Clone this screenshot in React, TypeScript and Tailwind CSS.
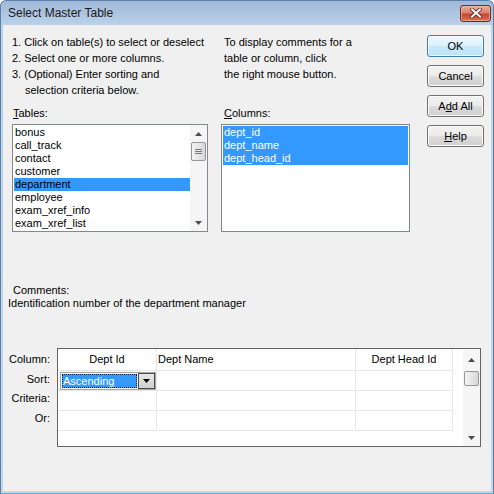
import React from "react";

const font = "font-['Liberation_Sans',Arial,sans-serif]";

const tables = [
  "bonus",
  "call_track",
  "contact",
  "customer",
  "department",
  "employee",
  "exam_xref_info",
  "exam_xref_list",
];

const columns = ["dept_id", "dept_name", "dept_head_id"];

function Arrow({ down = false, color = "#4d4d4d" }: { down?: boolean; color?: string }) {
  return (
    <svg width="7" height="4" viewBox="0 0 7 4">
      <polygon points={down ? "0,0 7,0 3.5,4" : "0,4 7,4 3.5,0"} fill={color} />
    </svg>
  );
}

function Thumb({ h, grip = true }: { h: number; grip?: boolean }) {
  return (
    <div
      className="mx-[1px] flex flex-col items-center justify-center gap-[1px] rounded-[2px] border border-[#979797] bg-[linear-gradient(90deg,#f4f4f4,#e6e6e6_50%,#d6d6d6)]"
      style={{ height: h }}
    >
      {grip && (
        <>
          <div className="h-px w-[7px] bg-[#7a7a7a]" />
          <div className="h-px w-[7px] bg-[#7a7a7a]" />
          <div className="h-px w-[7px] bg-[#7a7a7a]" />
        </>
      )}
    </div>
  );
}

function Button({ children, primary }: { children: React.ReactNode; primary?: boolean }) {
  return (
    <div
      className={
        primary
          ? "flex h-[22px] w-[57px] items-center justify-center rounded-[3px] border border-[#3c7fb1] bg-[linear-gradient(#eef8fe,#dcf0fc_50%,#c8e8fa_50%,#bde2f7)] shadow-[inset_0_0_0_1px_#ffffffb0]"
          : "flex h-[22px] w-[57px] items-center justify-center rounded-[3px] border border-[#707070] bg-[linear-gradient(#f2f2f2,#ebebeb_50%,#dddddd_50%,#cfcfcf)] shadow-[inset_0_0_0_1px_#fcfcfc]"
      }
    >
      {children}
    </div>
  );
}

function CloseButton() {
  return (
    <div className="flex h-[17px] w-[31px] items-center justify-center rounded-[3px] border border-[#6e2a20] bg-[linear-gradient(#e8ad9e,#d9826f_45%,#c7452f_55%,#d4725c)] shadow-[inset_0_0_0_1px_#f0c0b0a0]">
      <svg width="12" height="10" viewBox="0 0 12 10">
        <path d="M2 1.5 L10 8.5 M10 1.5 L2 8.5" stroke="#5a2219" strokeWidth="3.6" strokeLinecap="square" />
        <path d="M2 1.5 L10 8.5 M10 1.5 L2 8.5" stroke="#ffffff" strokeWidth="2" strokeLinecap="square" />
      </svg>
    </div>
  );
}

export default function App() {
  return (
    <div
      className={`flex h-[494px] w-[494px] flex-col rounded-t-[6px] border border-[#5a7fa8] border-b-[#4fb3e4] bg-[linear-gradient(#a0b9d7,#bcd2ea_25px,#c0d6ee)] px-[2px] pb-[2px] text-[11px] text-black ${font}`}
    >
      {/* title bar */}
      <div className="flex h-[24px] items-center justify-between pl-[5px]">
        <span className="text-[12px] text-[#1a1a1a]">Select Master Table</span>
        <CloseButton />
      </div>

      {/* client area */}
      <div className="flex flex-1 flex-col bg-[#f0f0f0]">
        <div className="flex pt-[9px]">
          <div className="flex flex-col pl-[9px]">
            <div className="flex leading-[16px]">
              <div className="w-[212px]">
                <div>1. Click on table(s) to select or deselect</div>
                <div>2. Select one or more columns.</div>
                <div>3. (Optional) Enter sorting and</div>
                <div className="pl-[13px]">selection criteria below.</div>
              </div>
              <div>
                <div>To display comments for a</div>
                <div>table or column, click</div>
                <div>the right mouse button.</div>
              </div>
            </div>

            <div className="mt-[7px] flex leading-[16px]">
              <div className="w-[212px] pl-[1px]">
                <span className="underline">T</span>ables:
              </div>
              <div>
                <span className="underline">C</span>olumns:
              </div>
            </div>

            <div className="mt-[3px] flex gap-[13px]">
              {/* tables list */}
              <div className="flex h-[108px] w-[196px] border border-[#828790] bg-white">
                <div className="flex-1 pl-[1px] pt-[1px] leading-[13px]">
                  {tables.map((t) => (
                    <div
                      key={t}
                      className={t === "department" ? "h-[13px] bg-[#3399ff] pl-[1px]" : "h-[13px] pl-[1px]"}
                    >
                      {t}
                    </div>
                  ))}
                </div>
                <div className="flex w-[17px] flex-col bg-[#f5f5f5]">
                  <div className="flex h-[17px] items-center justify-center">
                    <Arrow />
                  </div>
                  <Thumb h={19} />
                  <div className="flex-1" />
                  <div className="flex h-[17px] items-center justify-center">
                    <Arrow down />
                  </div>
                </div>
              </div>

              {/* columns list */}
              <div className="h-[108px] w-[189px] border border-[#828790] bg-white p-[1px] pr-[1px] leading-[13px] text-white">
                {columns.map((c) => (
                  <div key={c} className="h-[13px] bg-[#3399ff] pl-[1px]">
                    {c}
                  </div>
                ))}
              </div>
            </div>
          </div>

          <div className="ml-auto flex flex-col gap-[8px] pr-[7px] pt-[1px]">
            <Button primary>OK</Button>
            <Button>Cancel</Button>
            <Button>
              A<span className="underline">d</span>d All
            </Button>
            <Button>
              <span className="underline">H</span>elp
            </Button>
          </div>
        </div>

        {/* comments */}
        <div className="mt-[52px] leading-[13px]">
          <div className="pl-[10px]">Comments:</div>
          <div className="pl-[5px]">Identification number of the department manager</div>
        </div>

        {/* criteria grid */}
        <div className="mt-[38px] flex gap-[7px]">
          <div className="flex w-[47px] flex-col text-right">
            <div className="flex h-[22px] items-center justify-end">Column:</div>
            <div className="flex h-[18px] items-center justify-end">Sort:</div>
            <div className="flex h-[20px] items-center justify-end">Criteria:</div>
            <div className="flex h-[20px] items-center justify-end">Or:</div>
          </div>

          <div className="flex h-[99px] w-[424px] border border-[#646464] bg-white">
            <div className="flex w-[395px] flex-col">
              <div className="flex h-[22px]">
                <div className="flex w-[99px] items-center justify-center border-b border-r border-[#e8e8e8]">Dept Id</div>
                <div className="flex w-[199px] items-center border-b border-r border-[#e8e8e8] pl-px">Dept Name</div>
                <div className="flex w-[97px] items-center justify-center border-b border-r border-[#e8e8e8]">Dept Head Id</div>
              </div>
              <div className="flex h-[20px]">
                <div className="w-[99px] border-b border-r border-[#e8e8e8] pl-[2px] pt-[1px]">
                  <div className="flex h-[18px] w-[96px] border border-[#a5a5a5] bg-white">
                    <div className="m-px flex flex-1 items-center border border-dotted border-[#1a1a1a] bg-[#3399ff] text-white">
                      Ascending
                    </div>
                    <div className="flex w-[17px] items-center justify-center border border-[#4a4a4a] bg-[linear-gradient(#e6e6e6,#d0d0d0)]">
                      <Arrow down color="#000000" />
                    </div>
                  </div>
                </div>
                <div className="w-[199px] border-b border-r border-[#e8e8e8]" />
                <div className="w-[97px] border-b border-r border-[#e8e8e8]" />
              </div>
              {[0, 1].map((r) => (
                <div key={r} className="flex h-[20px]">
                  <div className="w-[99px] border-b border-r border-[#e8e8e8]" />
                  <div className="w-[199px] border-b border-r border-[#e8e8e8]" />
                  <div className="w-[97px] border-b border-r border-[#e8e8e8]" />
                </div>
              ))}
            </div>
            <div className="w-[10px]" />
            <div className="flex w-[17px] flex-col bg-[#f5f5f5]">
              <div className="flex h-[22px] items-center justify-center">
                <Arrow />
              </div>
              <Thumb h={15} grip={false} />
              <div className="flex-1" />
              <div className="flex h-[17px] items-center justify-center">
                <Arrow down />
              </div>
            </div>
          </div>
        </div>
      </div>
    </div>
  );
}
